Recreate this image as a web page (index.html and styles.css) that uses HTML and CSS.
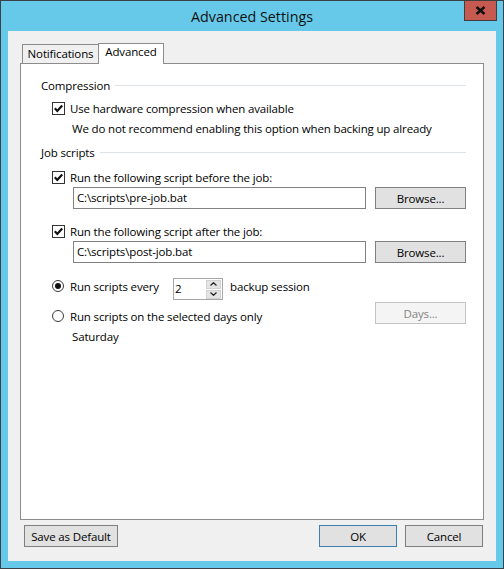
FILE: index.html
```html
<!DOCTYPE html>
<html lang="en">

<head>
    <meta charset="UTF-8">
    <meta name="viewport" content="width=device-width, initial-scale=1.0">
    <title>Advanced Settings</title>
    <link rel="stylesheet" href="styles.css">
</head>

<body>
    <div class="window">
        <div class="titlebar">
            <span class="title">Advanced Settings</span>
            <button class="close-btn" aria-label="Close">
                <svg width="11" height="9" viewBox="0 0 11 9">
                    <path d="M1.5 1 L9.5 8 M9.5 1 L1.5 8" stroke="#111" stroke-width="2.5" fill="none" />
                </svg>
            </button>
        </div>

        <div class="client">
            <div class="tabs">
                <div class="tab">Notifications</div>
                <div class="tab active">Advanced</div>
            </div>

            <div class="panel">
                <div class="group-title">Compression</div>
                <div class="check-row gap-cb1">
                    <span class="checkbox">
                        <svg width="13" height="13" viewBox="0 0 13 13">
                            <path d="M2.8 6.3 L5.3 8.9 L10.2 3.4" stroke="#111" stroke-width="2.2" fill="none" />
                        </svg>
                    </span>
                    <span>Use hardware compression when available</span>
                </div>
                <div class="note gap-note">We do not recommend enabling this option when backing up already</div>

                <div class="group-title gap-group">Job scripts</div>
                <div class="check-row gap-cb2">
                    <span class="checkbox">
                        <svg width="13" height="13" viewBox="0 0 13 13">
                            <path d="M2.8 6.3 L5.3 8.9 L10.2 3.4" stroke="#111" stroke-width="2.2" fill="none" />
                        </svg>
                    </span>
                    <span>Run the following script before the job:</span>
                </div>
                <div class="path-row gap-path">
                    <div class="textbox">C:\scripts\pre-job.bat</div>
                    <button class="btn browse">Browse...</button>
                </div>

                <div class="check-row gap-cb3">
                    <span class="checkbox">
                        <svg width="13" height="13" viewBox="0 0 13 13">
                            <path d="M2.8 6.3 L5.3 8.9 L10.2 3.4" stroke="#111" stroke-width="2.2" fill="none" />
                        </svg>
                    </span>
                    <span>Run the following script after the job:</span>
                </div>
                <div class="path-row gap-path">
                    <div class="textbox">C:\scripts\post-job.bat</div>
                    <button class="btn browse">Browse...</button>
                </div>

                <div class="radio-row gap-radio1">
                    <span class="radio checked"></span>
                    <span class="every-label">Run scripts every</span>
                    <div class="spinner">
                        <span class="spinner-value">2</span>
                        <div class="spin-buttons">
                            <span class="spin-btn">
                                <svg width="7" height="4" viewBox="0 0 7 4">
                                    <path d="M0.5 3.5 L3.5 0.7 L6.5 3.5" stroke="#222" stroke-width="1.2" fill="none" />
                                </svg>
                            </span>
                            <span class="spin-btn">
                                <svg width="7" height="4" viewBox="0 0 7 4">
                                    <path d="M0.5 0.5 L3.5 3.3 L6.5 0.5" stroke="#222" stroke-width="1.2" fill="none" />
                                </svg>
                            </span>
                        </div>
                    </div>
                    <span class="session-label">backup session</span>
                </div>

                <div class="radio-row gap-radio2">
                    <span class="radio"></span>
                    <span>Run scripts on the selected days only</span>
                    <button class="btn browse days" disabled>Days...</button>
                </div>
                <div class="note gap-days">Saturday</div>
            </div>

            <div class="footer">
                <button class="btn save-btn">Save as Default</button>
                <div class="footer-right">
                    <button class="btn dialog-btn default">OK</button>
                    <button class="btn dialog-btn">Cancel</button>
                </div>
            </div>
        </div>
    </div>
</body>

</html>
```

FILE: styles.css
```css
* {
    box-sizing: border-box;
}

body {
    margin: 0;
    font-family: "Open Sans", "Noto Sans", sans-serif;
    font-size: 11.5px;
    letter-spacing: -0.15px;
    color: #000000;
}

.window {
    width: 504px;
    height: 569px;
    background-color: #67c9e9;
    border: 1px solid #3b4147;
    display: flex;
    flex-direction: column;
}

/* title bar */
.titlebar {
    height: 30px;
    display: grid;
    grid-template-columns: 1fr;
}

.title,
.close-btn {
    grid-row: 1;
    grid-column: 1;
}

.title {
    justify-self: center;
    align-self: center;
    font-size: 14.3px;
    letter-spacing: 0;
    color: #111111;
    margin-top: 1px;
}

.close-btn {
    justify-self: end;
    align-self: start;
    width: 33px;
    height: 21px;
    margin: -1px 6px 0 0;
    padding: 0;
    background-color: #c75a50;
    border: 1px solid #3e3e3e;
    display: flex;
    justify-content: center;
    align-items: center;
}

/* client area */
.client {
    flex: 1;
    margin: 0 7px 7px 7px;
    background-color: #f0f0f0;
    padding: 12px 13px 14px 12px;
    display: flex;
    flex-direction: column;
}

.tabs {
    display: flex;
    align-items: flex-end;
    height: 20px;
    margin-left: 2px;
}

.tab {
    height: 19px;
    border: 1px solid #8c8c8c;
    border-bottom: none;
    background-color: #f0f0f0;
    display: flex;
    justify-content: center;
    align-items: center;
    padding-bottom: 1px;
}

.tab:first-child {
    width: 76px;
    border-right: none;
}

.tab.active {
    width: 66px;
    height: 21px;
    margin-bottom: -1px;
    background-color: #ffffff;
    position: relative;
    z-index: 1;
    padding-bottom: 5px;
}

.panel {
    height: 457px;
    margin-right: -1px;
    border: 1px solid #8c8c8c;
    background-color: #ffffff;
    padding: 13px 17px 0 20px;
    display: flex;
    flex-direction: column;
}

/* rows */
.group-title {
    height: 16px;
    display: flex;
    align-items: center;
}

.group-title::after {
    content: "";
    flex: 1;
    height: 1px;
    margin-left: 5px;
    background-color: #dde2e7;
}

.check-row,
.radio-row {
    display: flex;
    align-items: center;
    padding-left: 11px;
}

.check-row {
    height: 16px;
}

.radio-row {
    height: 22px;
}

.checkbox {
    width: 13px;
    height: 13px;
    border: 1px solid #333333;
    background-color: #ffffff;
    margin-right: 5px;
    display: flex;
}

.checkbox svg {
    margin: -1px;
}

.radio {
    width: 12px;
    height: 12px;
    border: 1px solid #3a3a3a;
    border-radius: 50%;
    margin-right: 6px;
    display: flex;
    justify-content: center;
    align-items: center;
}

.radio.checked::after {
    content: "";
    width: 6px;
    height: 6px;
    border-radius: 50%;
    background-color: #111111;
}

.note {
    height: 16px;
    line-height: 16px;
    padding-left: 31px;
}

.path-row {
    display: flex;
    padding-left: 32px;
    gap: 9px;
}

.textbox {
    flex: 1;
    height: 22px;
    border: 1px solid #828282;
    background-color: #ffffff;
    padding-left: 3px;
    line-height: 20px;
}

.btn {
    font-family: inherit;
    font-size: 11.5px;
    letter-spacing: -0.15px;
    color: #000000;
    background-color: #e1e1e1;
    border: 1px solid #7f7f7f;
    height: 22px;
    padding: 0;
}

.browse {
    width: 91px;
}

.days {
    margin-left: auto;
    margin-top: -3px;
    margin-bottom: 3px;
    background-color: #f4f4f4;
    border-color: #c4c4c4;
    color: #838383;
}

.every-label {
    width: 103px;
}

.spinner {
    width: 50px;
    height: 22px;
    border: 1px solid #a6a6a6;
    background-color: #ffffff;
    display: flex;
    margin: 3px 0 -3px 0;
}

.spinner-value {
    flex: 1;
    padding-left: 1px;
    line-height: 20px;
}

.spin-buttons {
    width: 16px;
    padding: 0 1px 0 0;
    display: flex;
    flex-direction: column;
    justify-content: center;
    gap: 1px;
}

.spin-btn {
    height: 9px;
    background-color: #e4e4e4;
    border: 1px solid #d2d2d2;
    display: flex;
    justify-content: center;
    align-items: center;
}

.session-label {
    margin-left: 7px;
}

/* vertical spacing */
.gap-cb1 {
    margin-top: 7px;
}

.gap-note {
    margin-top: 5px;
}

.gap-group {
    margin-top: 7px;
}

.gap-cb2 {
    margin-top: 9px;
}

.gap-path {
    margin-top: 2px;
}

.gap-cb3 {
    margin-top: 14px;
}

.gap-radio1 {
    margin-top: 12px;
}

.gap-radio2 {
    margin-top: 8px;
}

.gap-days {
    margin-top: 2px;
}

/* footer buttons */
.footer {
    margin-top: 5px;
    padding-left: 4px;
    display: flex;
    justify-content: space-between;
}

.save-btn {
    width: 94px;
}

.footer-right {
    display: flex;
    gap: 8px;
}

.dialog-btn {
    width: 78px;
}

.dialog-btn.default {
    border-color: #3c7fb1;
}
```
